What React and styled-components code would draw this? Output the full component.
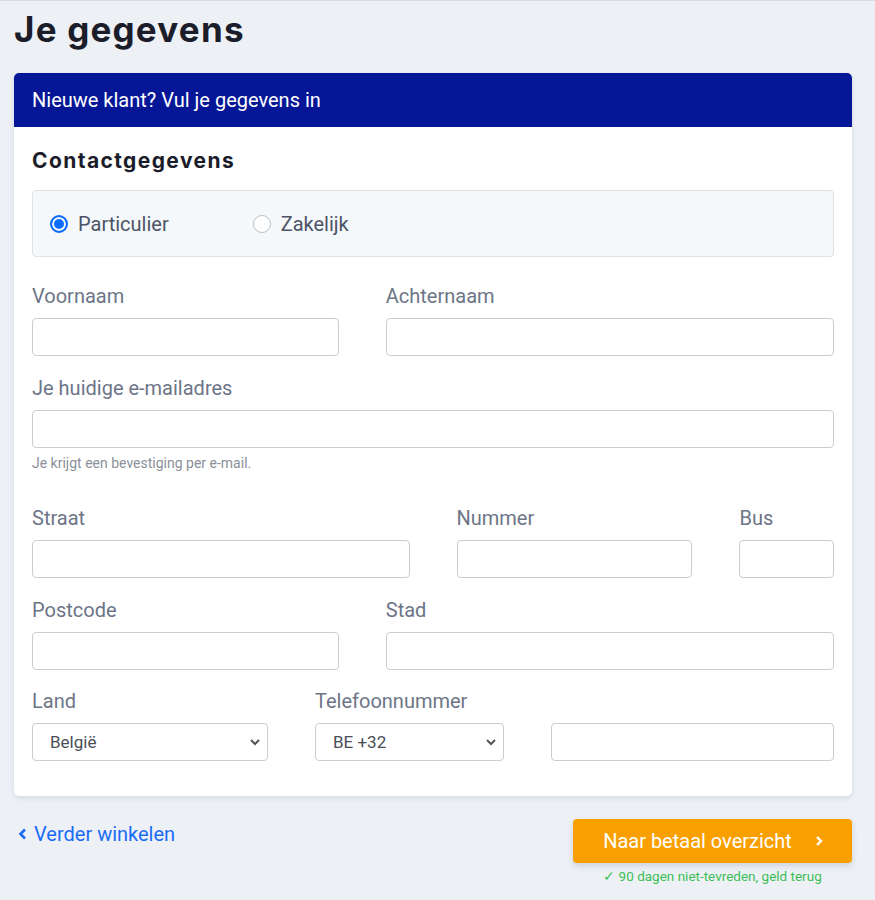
import React from 'react';
import styled, { createGlobalStyle } from 'styled-components';

const GlobalStyle = createGlobalStyle`
  * { box-sizing: border-box; }
  body {
    margin: 0;
    background: #edf1f6;
    font-family: Roboto, "Liberation Sans", sans-serif;
    border-top: 1px solid #d8dbe0;
  }
`;

function Field({ label, span, children }) {
  return (
    <Col span={span}>
      <Label>{label}</Label>
      {children}
    </Col>
  );
}

function Dropdown({ children, defaultValue }) {
  return (
    <SelectWrap>
      <Select defaultValue={defaultValue}>{children}</Select>
      <Caret width='12' height='8' viewBox='0 0 12 8'>
        <path d='M2 2 L6 6 L10 2' fill='none' stroke='#555' strokeWidth='2' />
      </Caret>
    </SelectWrap>
  );
}

function App() {
  return (
    <Page>
      <GlobalStyle />
      <Title>Je gegevens</Title>

      <Card>
        <CardHeader>Nieuwe klant? Vul je gegevens in</CardHeader>
        <CardBody>
          <SectionTitle>Contactgegevens</SectionTitle>

          <RadioBox>
            <RadioLabel>
              <Radio type='radio' name='type' defaultChecked />
              Particulier
            </RadioLabel>
            <RadioLabel>
              <Radio type='radio' name='type' />
              Zakelijk
            </RadioLabel>
          </RadioBox>

          <Row>
            <Field label='Voornaam' span={5}><Input /></Field>
            <Field label='Achternaam' span={7}><Input /></Field>
          </Row>

          <Row>
            <Col span={12}>
              <Label>Je huidige e-mailadres</Label>
              <Input type='email' />
              <Help>Je krijgt een bevestiging per e-mail.</Help>
            </Col>
          </Row>

          <Row>
            <Field label='Straat' span={6}><Input /></Field>
            <Field label='Nummer' span={4}><Input /></Field>
            <Field label='Bus' span={2}><Input /></Field>
          </Row>

          <Row>
            <Field label='Postcode' span={5}><Input /></Field>
            <Field label='Stad' span={7}><Input /></Field>
          </Row>

          <Row last>
            <Field label='Land' span={4}>
              <Dropdown defaultValue='be'>
                <option value='be'>België</option>
                <option value='nl'>Nederland</option>
              </Dropdown>
            </Field>
            <Col span={8}>
              <Label>Telefoonnummer</Label>
              <Row last>
                <Col span={5}>
                  <Dropdown defaultValue='be'>
                    <option value='be'>BE +32</option>
                    <option value='nl'>NL +31</option>
                  </Dropdown>
                </Col>
                <Col span={7}>
                  <Input type='tel' />
                </Col>
              </Row>
            </Col>
          </Row>
        </CardBody>
      </Card>

      <Footer>
        <BackLink href='#'>
          <svg width='10' height='12' viewBox='0 0 10 12'>
            <path d='M7 1.5 L2.5 6 L7 10.5' fill='none' stroke='#1a6cf5' strokeWidth='2.6' />
          </svg>
          Verder winkelen
        </BackLink>
        <NextBlock>
          <NextButton>
            Naar betaal overzicht
            <svg width='10' height='12' viewBox='0 0 10 12'>
              <path d='M3 2 L7 6 L3 10' fill='none' stroke='#fff' strokeWidth='2.4' />
            </svg>
          </NextButton>
          <Guarantee>✓ 90 dagen niet-tevreden, geld terug</Guarantee>
        </NextBlock>
      </Footer>
    </Page>
  );
}

const Page = styled.div`
  padding: 0 23px 0 14px;
`;

const Title = styled.h1`
  font-family: Inter, "Noto Sans", sans-serif;
  font-weight: 700;
  font-size: 35px;
  letter-spacing: 1.2px;
  color: #1c1d2a;
  margin: 0;
  padding: 8px 0 0;
  line-height: 40px;
  height: 72px;
`;

const Card = styled.div`
  background: #fff;
  border-radius: 5px;
  overflow: hidden;
  box-shadow: 0 2px 5px rgba(30, 40, 70, 0.12);
`;

const CardHeader = styled.div`
  background: #051696;
  color: #fff;
  font-size: 20px;
  height: 54px;
  display: flex;
  align-items: center;
  padding: 0 18px;
`;

const CardBody = styled.div`
  padding: 22px 18px 35px;
`;

const SectionTitle = styled.h3`
  font-family: Inter, "Noto Sans", sans-serif;
  font-weight: 700;
  font-size: 21px;
  letter-spacing: 1.4px;
  line-height: 24px;
  color: #1c1d2a;
  margin: 0 0 17px;
`;

const RadioBox = styled.div`
  height: 67px;
  background: #f5f8fb;
  border: 1px solid #dde2e7;
  border-radius: 4px;
  display: flex;
  align-items: center;
  gap: 84px;
  padding: 0 17px;
  margin-bottom: 27px;
`;

const RadioLabel = styled.label`
  display: flex;
  align-items: center;
  gap: 10px;
  font-size: 20px;
  color: #4c5466;
  cursor: pointer;
`;

const Radio = styled.input`
  appearance: none;
  margin: 0;
  width: 18px;
  height: 18px;
  border-radius: 50%;
  border: 1px solid #b9bec6;
  background: #fff;

  &:checked {
    border: 2px solid #0d6efd;
    background: #0d6efd;
    box-shadow: inset 0 0 0 2px #fff;
  }
`;

const Row = styled.div`
  display: flex;
  margin: 0 -23.5px ${p => (p.last ? '0' : '19.5px')};
`;

const Col = styled.div`
  flex: 0 0 ${p => (p.span / 12) * 100}%;
  padding: 0 23.5px;
`;

const Label = styled.div`
  font-size: 20px;
  line-height: 24px;
  color: #6c7587;
  margin-bottom: 10px;
`;

const Input = styled.input`
  display: block;
  width: 100%;
  height: 38px;
  border: 1px solid #cbcdd0;
  border-radius: 4px;
  background: #fff;
  font-size: 16px;
  padding: 0 12px;
  outline: none;
`;

const SelectWrap = styled.div`
  position: relative;
`;

const Select = styled.select`
  appearance: none;
  display: block;
  width: 100%;
  height: 38px;
  border: 1px solid #cbcdd0;
  border-radius: 4px;
  background: #fff;
  font-family: Roboto, "Liberation Sans", sans-serif;
  font-size: 17px;
  color: #4a4e57;
  padding: 0 30px 0 17px;
  outline: none;
`;

const Caret = styled.svg`
  position: absolute;
  right: 7px;
  top: 15px;
  pointer-events: none;
`;

const Help = styled.div`
  font-size: 14px;
  line-height: 18px;
  color: #8b9099;
  margin: 6px 0 15px;
`;

const Footer = styled.div`
  display: flex;
  justify-content: space-between;
  align-items: flex-start;
  padding: 23px 0 0 4px;
`;

const BackLink = styled.a`
  display: flex;
  align-items: center;
  gap: 6px;
  font-size: 20px;
  color: #1a6cf5;
  text-decoration: none;
  margin-top: 3px;
`;

const NextBlock = styled.div`
  width: 279px;
  display: flex;
  flex-direction: column;
  align-items: center;
`;

const NextButton = styled.button`
  width: 100%;
  height: 44px;
  border: none;
  border-radius: 4px;
  background: #f9a000;
  color: #fff;
  font-family: Roboto, "Liberation Sans", sans-serif;
  font-size: 20px;
  display: flex;
  align-items: center;
  justify-content: center;
  gap: 22px;
  padding-left: 8px;
  box-shadow: 0 3px 6px rgba(30, 40, 70, 0.15);
  cursor: pointer;
`;

const Guarantee = styled.div`
  font-size: 13.5px;
  color: #3dbd57;
  margin-top: 5px;
`;

export default App;
